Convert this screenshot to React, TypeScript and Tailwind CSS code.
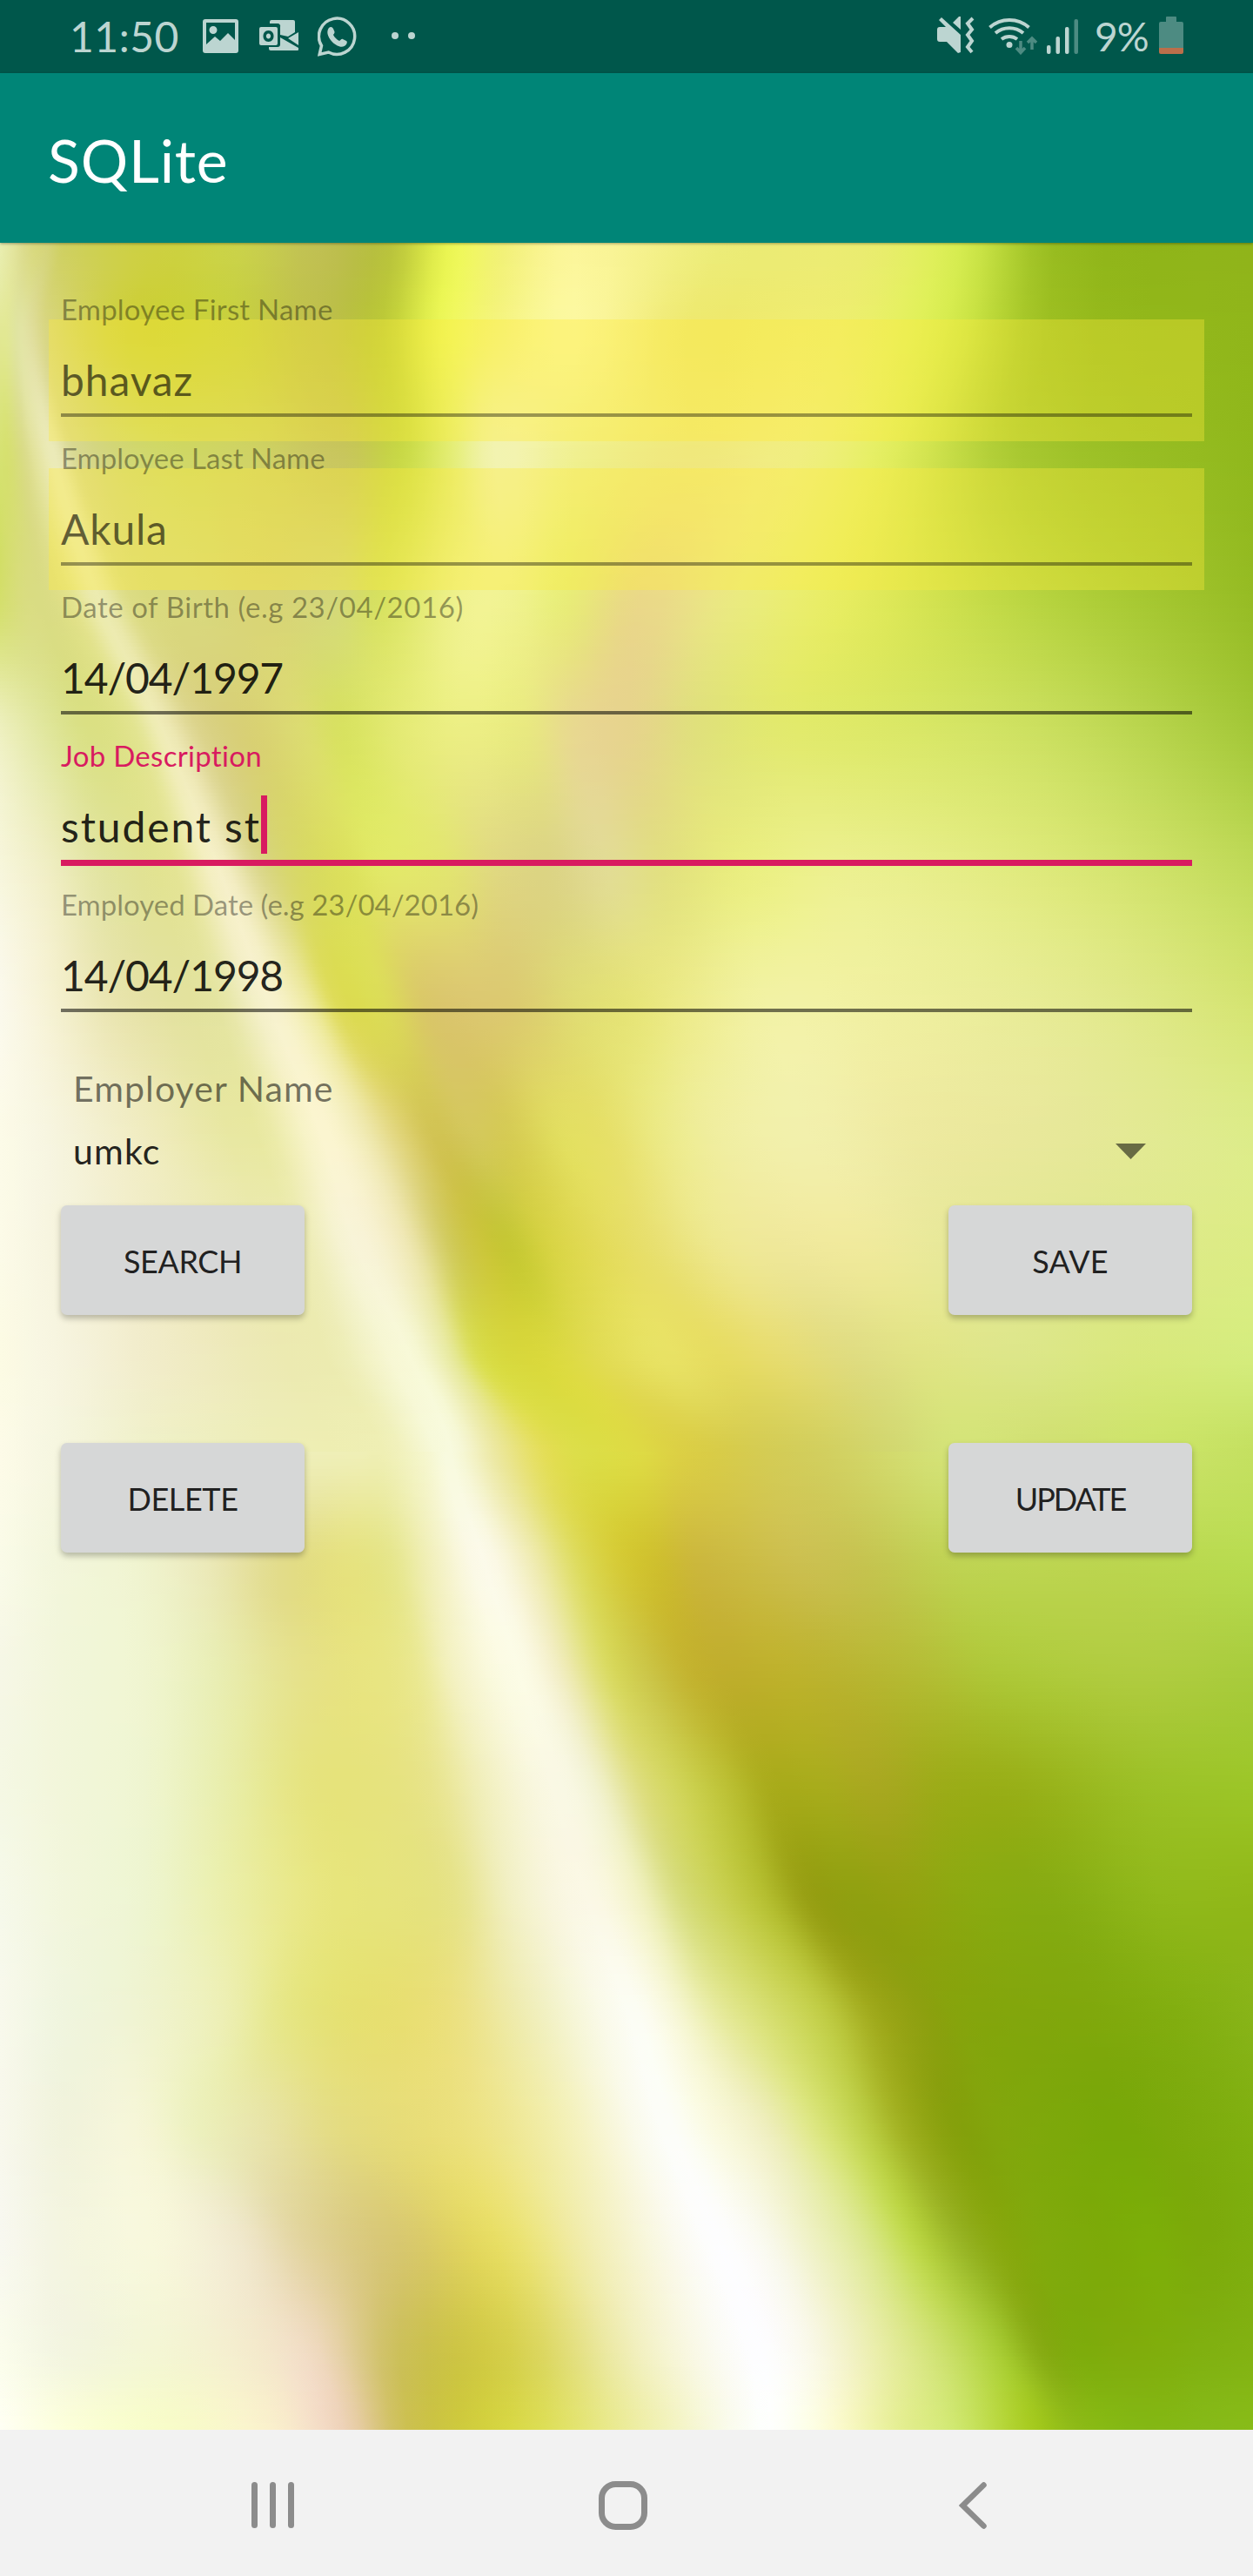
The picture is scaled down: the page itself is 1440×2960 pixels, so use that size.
import React from "react";

type Row = [number, string];

const UPPER: Row[] = [
  [280, "0:e9eeb0 15:e4e6a0 30:dcdc8c 45:d8d87c 60:d4d478 80:cfd060 200:cdd040 300:cad24a 400:c0c052 490:bac43c 560:eaf552 630:f2f178 720:fcf69a 900:ecec78 1080:eaec70 1200:d6ec50 1320:98bc20 1568:90b41a"],
  [380, "0:e2e894 8:e2e894 20:e0e4a0 28:e2e4a4 40:e0de9c 60:d8d680 160:cdd03c 290:c8d040 400:bfc04c 480:bdcb38 550:eaf558 620:f4f480 720:fbf8a0 860:efe970 1050:eeee70 1180:d8ec50 1310:9ec022 1568:90b61a"],
  [520, "0:d6e272 10:d6e070 30:dadc88 45:e4e4a0 68:ebeab8 95:d8d890 200:d0d868 320:cfd264 430:c8c65c 500:c8d846 560:e2ec70 620:f2f3b0 720:f0f090 860:f0e87c 1000:f0ee80 1120:e0ec5c 1280:a8c830 1568:90b81c"],
  [690, "0:d4df6c 30:d9dd80 60:dadc84 90:e2e28c 125:ecebb0 165:dcdc84 250:d8d87c 330:d8d474 420:d4d878 480:d8e260 580:f0f290 640:f0f290 710:e8ec78 800:ead888 920:eaea80 1060:e6ec60 1300:b8d440 1568:96bc24"],
  [840, "0:eef0c0 60:e0e69c 110:dae084 170:e2e490 205:f0ecb8 250:dcd48c 310:d8d074 380:dcdc70 430:d8e260 500:e4ea74 580:ecee84 660:e8e880 720:e8d890 790:e6d48c 870:e0e07c 1000:e2ea6c 1300:cce060 1568:a4c838"],
  [1000, "0:f7f6dc 60:f0eec4 130:e2e4a0 220:e4e494 275:f6f0c8 325:dcd88c 370:d8d868 430:dce05c 480:e2e868 560:e2e470 620:e0d880 690:dcd484 760:e2dc94 830:e2e080 930:eaee80 1060:ecf090 1330:dce878 1568:c0da58"],
  [1150, "0:fbf9ec 60:f6f2d4 150:e8e4ac 270:e4e4a0 335:f7f2ce 385:eeeaa0 420:dedc58 480:dcdc58 530:dac868 590:dcc870 650:dccc70 720:e0dc74 790:e6e478 850:ecea88 960:f2f2a4 1100:f0f0a0 1350:e4ea90 1568:d4e470"],
  [1300, "0:fcfbe8 60:f7f5e0 180:f0ecc0 320:e8e8a0 400:fbf5d0 450:f2ecb8 500:e0d478 540:d2c454 590:d4c85c 640:d6cc54 700:e2de60 760:e6e068 830:ecea88 900:f0eea0 1010:f2f0ac 1140:eeeaa0 1350:e6e898 1568:dcec88"],
  [1430, "0:fcfbe8 60:f7f5e0 200:f0ecc4 370:ecebb0 445:f8f4d8 510:efe8b4 560:d2cc60 600:ccc63c 640:c6c834 690:d8d444 760:e4dc5c 820:e8e070 900:eee890 980:efe89a 1080:f0ea9c 1200:e6e898 1380:dfe88c 1568:dcec84"],
  [1560, "0:fcfbe4 70:f7f5e0 200:f1ecc8 410:ecebb0 515:f8f9d8 565:e8eaa0 600:dade50 650:d8d83c 700:dcda40 760:e2dc54 830:e8e264 900:e6dc60 980:e6dc70 1070:dfdc80 1160:e0e484 1280:dce688 1420:d8e87c 1568:d4ec7c"],
  [1666, "0:fdfbe8 70:f6f6e0 220:eff0c4 480:efefb4 565:f8fade 620:ece8a0 680:e4de58 730:dcde48 790:dedb44 850:dcd044 900:d8cc48 960:d4cc54 1040:d2d060 1120:d2d870 1200:d4e478 1320:d0e070 1450:cce468 1568:c4e060"],
];

const LOWER: Row[] = [
  [1666, "0:fdfbe8 70:f6f6e0 150:f2f2d2 250:eff0c2 400:efefb8 450:efefb6 480:efefb4 530:f5f6cc 565:f8fade 620:ece8a0 680:e4de58 730:dcde48 800:dedb44 850:dcd044 900:d8cc48 960:d4cc54 1040:d2d060 1200:d4e478 1400:cee46c 1568:c4e060"],
  [1790, "0:fafbe8 70:f3f6dc 170:f0f4d0 260:ebe9b8 350:e2dc8c 430:e6e280 490:e6e68c 540:f2f0bc 605:fcfaea 665:f0ecb4 720:dedc60 770:d6cc38 820:cfc02e 870:ccb83c 930:ccbc44 1000:ccc050 1080:c6c450 1200:c0d454 1400:bcd650 1568:b8dc50"],
  [1920, "0:f6f7e6 80:f2f6da 180:f0f5d0 270:e9eeb4 370:e6e28c 450:e8e480 520:eae890 570:f4f2c4 650:fcfce6 700:f2eec4 760:dadb64 810:ccc648 860:c4b430 910:bfae2c 980:beb22c 1050:bab430 1150:b4bc34 1250:aec838 1420:b0cc40 1568:a8cc3c"],
  [2050, "0:f5f8e4 80:f2f6da 180:eff5d0 280:e9eeac 380:e6e480 460:e6e37c 540:e8e48c 610:f2f0c0 690:faf8e4 745:f2f2d0 800:dede80 850:d0d458 910:bcc034 960:aaac1c 1030:a8ac1c 1100:a8a820 1180:9cac18 1280:98b018 1430:9cc026 1568:9cc628"],
  [2180, "0:f6f9ea 80:f2f6dc 180:eef5d0 280:ebefac 400:e8e680 480:e6e47c 570:e6e388 640:f2f0c4 735:fbf8e6 800:f2f2c4 850:d8de80 910:c8d050 960:b4be30 1010:98a014 1070:90a010 1130:92a210 1220:8aaa10 1320:86ac12 1450:90b81a 1568:90b818"],
  [2310, "0:f8f9ec 80:f0f5de 170:f0f4d2 280:edefb4 360:e6e684 450:e6e070 560:ebe07c 650:efecb0 785:fcfdf4 840:f8f8da 900:e6ea9c 960:d6de70 1030:c0cc44 1090:a0aa1c 1150:8ea010 1200:86a40c 1280:82a60c 1370:80a80c 1470:82ae10 1568:88b418"],
  [2440, "0:f8f8ec 80:f1f3dc 170:f6f6d8 250:ecf0bc 330:e8e4a8 430:e4dc80 570:ebe07c 690:f2eeac 825:fcfdf8 890:fafae0 960:eeeebc 1020:dce680 1080:bed048 1130:a0b020 1190:86a00c 1250:82a60c 1330:7ca80a 1400:78a808 1480:7caa0c 1568:80b010"],
  [2570, "0:f8f8f0 80:f4f5e0 190:f8f8dc 300:f0e8cc 380:e2d49c 500:d8c870 620:e8de64 740:f2eeb4 880:fdfdfc 950:fafaf0 1010:f0f2c8 1080:dce890 1140:bed848 1200:98b424 1250:88a80e 1310:80aa0c 1380:7caa08 1440:7cae08 1500:7caa0a 1568:7eae0e"],
  [2700, "0:fbfdec 80:f3f5e0 200:f4f6d4 320:f4eacc 400:eed8bc 500:ccc05a 640:d6d04c 800:f2f0c0 935:fdfdfe 1000:fbfaf0 1060:f2f2c8 1110:e6eca0 1180:cce06c 1250:a8cc34 1300:88ac14 1350:7eac0c 1400:80ac0c 1450:80ae0c 1500:80b010 1568:82b212"],
  [2792, "0:fffff4 90:fcffd8 210:f8fcc8 340:faf0cc 430:eed2b8 510:ccc050 640:d8d844 800:eeeea4 950:fdfffc 1010:fdffe8 1050:fbfacc 1128:e4ee90 1195:d0e870 1288:a8cc20 1340:90bc18 1380:88ba14 1420:84b814 1460:84b814 1510:86ba18 1568:88bc18"],
];

const STEP = 4;
const PARTS = 4;

function parse(row: string) {
  return row.split(" ").map((part) => {
    const [x, hex] = part.split(":");
    const n = parseInt(hex, 16);
    return [Number(x), n >> 16, (n >> 8) & 255, n & 255];
  });
}

function hermite(a: number, b: number, ma: number, mb: number, t: number) {
  const t2 = t * t;
  const t3 = t2 * t;
  return (2 * t3 - 3 * t2 + 1) * a + (t3 - 2 * t2 + t) * ma + (3 * t2 - 2 * t3) * b + (t3 - t2) * mb;
}

/** Slope of channel c at knot k, as the mean of the slopes on its two sides. */
function slope(knots: number[][], k: number, c: number) {
  const lo = Math.max(0, k - 1);
  const hi = Math.min(knots.length - 1, k + 1);
  return (knots[hi][c] - knots[lo][c]) / Math.max(1, knots[hi][0] - knots[lo][0]);
}

function toColor(rgb: number[]) {
  const [r, g, b] = rgb.map((v) => Math.max(0, Math.min(255, Math.round(v))));
  return `rgb(${r},${g},${b})`;
}

function buildStrips() {
  const upper = UPPER.map((r) => parse(r[1]));
  const lower = LOWER.map((r) => parse(r[1]));
  const out: { y: number; stops: { at: number; color: string }[] }[] = [];
  for (let y = 280; y < 2792; y += STEP) {
    const rows = y < 1666 ? UPPER : LOWER;
    const data = y < 1666 ? upper : lower;
    let i = 0;
    while (i < rows.length - 2 && rows[i + 1][0] <= y) i++;
    const t = (y - rows[i][0]) / (rows[i + 1][0] - rows[i][0]);
    const before = data[Math.max(0, i - 1)];
    const after = data[Math.min(data.length - 1, i + 2)];
    const a = data[i];
    const b = data[i + 1];
    const knots = a.map((s, k) =>
      s.map((v, c) => hermite(v, b[k][c], (b[k][c] - before[k][c]) / 2, (after[k][c] - v) / 2, t)),
    );
    const stops: { at: number; color: string }[] = [];
    for (let k = 0; k < knots.length - 1; k++) {
      const w = knots[k + 1][0] - knots[k][0];
      for (let j = 0; j < PARTS; j++) {
        const u = j / PARTS;
        stops.push({
          at: (knots[k][0] + w * u) / 1568,
          color: toColor(
            [1, 2, 3].map((c) =>
              hermite(knots[k][c], knots[k + 1][c], slope(knots, k, c) * w, slope(knots, k + 1, c) * w, u),
            ),
          ),
        });
      }
    }
    stops.push({ at: 1, color: toColor(knots[knots.length - 1].slice(1)) });
    out.push({ y, stops });
  }
  return out;
}

const STRIPS = buildStrips();

function LeafBackdrop() {
  return (
    <svg
      className="absolute inset-0 h-full w-full"
      viewBox="0 0 1440 2512"
      preserveAspectRatio="none"
      shapeRendering="crispEdges"
      aria-hidden="true"
    >
      <defs>
        {STRIPS.map((s) => (
          <linearGradient key={s.y} id={`leaf-${s.y}`}>
            {s.stops.map((p, i) => (
              <stop key={i} offset={p.at} stopColor={p.color} />
            ))}
          </linearGradient>
        ))}
      </defs>
      {STRIPS.map((s) => (
        <rect key={s.y} x="0" y={s.y - 280} width="1440" height={STEP} fill={`url(#leaf-${s.y})`} />
      ))}
    </svg>
  );
}

function StatusBar() {
  return (
    <div className="flex h-[84px] items-center bg-[#00574b] text-[#bcd5d1]">
      <span className="ml-[80px] w-[153px] text-[48px] leading-[84px] tracking-[0.5px]">11:50</span>
      <svg width="41" height="39" viewBox="0 0 41 39" className="-mt-[2px]">
        <path
          fill="currentColor"
          fillRule="evenodd"
          d="M3 0h35a3 3 0 0 1 3 3v33a3 3 0 0 1-3 3H3a3 3 0 0 1-3-3V3a3 3 0 0 1 3-3zM4 4v25l10-9 6 5 9-9 8 8V4zM12 8a4.500 4.500 0 1 1 0 9 4.500 4.500 0 0 1 0-9z"
        />
      </svg>
      <svg width="46" height="36" viewBox="0 0 46 36" className="-mt-[2px] ml-[24px]">
        <path fill="currentColor" d="M12 4V2a2 2 0 0 1 2-2h25a2 2 0 0 1 2 2v12l-8 5-9-2V8a3 3 0 0 0-3-4z" />
        <path fill="currentColor" d="M45 14v15L33 21zM24 20l21 12v2a1 1 0 0 1-1 1H13a2 2 0 0 1-2-2v-2h10a3 3 0 0 0 3-3z" />
        <path
          fill="currentColor"
          fillRule="evenodd"
          d="M2 8h17a2 2 0 0 1 2 2v17a2 2 0 0 1-2 2H2a2 2 0 0 1-2-2V10a2 2 0 0 1 2-2zM10.500 12c-8 0-8 13 0 13s8-13 0-13zm0 3.500c3.500 0 3.500 6 0 6s-3.500-6 0-6z"
        />
      </svg>
      <svg width="46" height="46" viewBox="0 0 46 46" className="-mt-[1px] ml-[21px]">
        <path
          fill="none"
          stroke="currentColor"
          strokeWidth="3.500"
          d="M2.200 43.500 4.500 33.500A20.600 20.600 0 1 1 12.500 41z"
        />
        <path
          fill="currentColor"
          d="M13 13c2-2 4-1 5 1l1.500 3.500c.5 1.500-1.500 3-1.500 3.500 1.500 3 4 5.500 7 7 1 0 2.500-3 4-2l4 2c1 .5 1 1.500.500 3-1 3-5 4.500-8 3.500C18 32 13 26 11.500 20c-.5-3 0-5 1.500-7z"
        />
      </svg>
      <div className="-mt-[2px] ml-[39px] flex gap-[11px]">
        <i className="size-[8px] rounded-full bg-current" />
        <i className="size-[8px] rounded-full bg-current" />
      </div>

      <div className="ml-auto flex h-full items-center pr-[80px]">
        <svg width="43" height="44" viewBox="0 0 43 44" className="-mt-[3px]">
          <path fill="currentColor" d="M0 15a3 3 0 0 1 3-3h7L2 4l3-3 22 20v20l-3 1L11 29H3a3 3 0 0 1-3-3zM27 0v15l-9-8 7-7z" />
          <path fill="none" stroke="currentColor" strokeWidth="4" d="M41 2l-6 6 5 7-5 6 5 7-5 7 5 6" />
        </svg>
        <svg width="58" height="44" viewBox="0 0 58 44" className="-mt-[2px] ml-[16px]">
          <g fill="none" stroke="currentColor" strokeWidth="4">
            <path d="M1.500 12.500a34 34 0 0 1 45 0" />
            <path d="M8 19a25 25 0 0 1 32 0" />
            <path d="M15 26a15 15 0 0 1 18 0" />
          </g>
          <circle cx="24" cy="32.500" r="3.500" fill="currentColor" />
          <path fill="none" stroke="#4d8b82" strokeWidth="3.500" d="M37 28v13m-5-5 5 5.500 5-5.500M50 38V26m-5 4 5-5 5 5" />
        </svg>
        <svg width="37" height="42" viewBox="0 0 37 42" className="ml-[9px]">
          <rect x="0" y="31" width="4.500" height="10" rx="2" fill="currentColor" />
          <rect x="10.500" y="21" width="4.500" height="20" rx="2" fill="currentColor" />
          <rect x="21" y="10" width="4.500" height="31" rx="2" fill="currentColor" />
          <rect x="31.500" y="1" width="4.500" height="40" rx="2" fill="#4d8b82" />
        </svg>
        <span className="ml-[18px] w-[64px] whitespace-nowrap text-[46px] leading-[84px] tracking-[-1px]">9%</span>
        <svg width="28" height="44" viewBox="0 0 28 44" className="-mt-[2px] ml-[10px]">
          <path fill="#4d8b82" d="M8 1a1 1 0 0 1 1-1h10a1 1 0 0 1 1 1v5h6a2 2 0 0 1 2 2v28H0V8a2 2 0 0 1 2-2h6z" />
          <path fill="#bb6f4b" d="M0 36h28v5a2 2 0 0 1-2 2H2a2 2 0 0 1-2-2z" />
        </svg>
      </div>
    </div>
  );
}

type FieldProps = {
  label: string;
  value: string;
  labelClass: string;
  valueClass: string;
  state?: "filled" | "focused";
};

function Field({ label, value, labelClass, valueClass, state }: FieldProps) {
  const focused = state === "focused";
  const filled = state === "filled";
  return (
    <div className="relative h-[171px] px-[70px]">
      {filled && <div className="absolute top-[34px] right-[56px] left-[56px] h-[140px] bg-[#ffeb3b]/35" />}
      <div className="relative">
        <div
          className={`h-[44px] text-[33px] leading-[44px] whitespace-nowrap ${labelClass} ${
            focused ? "text-[#d81b60]" : "text-black/38"
          }`}
        >
          {label}
        </div>
        <div
          className={`mt-[30px] flex h-[60px] items-center text-[48px] leading-[60px] whitespace-nowrap ${valueClass} ${
            filled ? "text-black/60" : "text-black/87"
          }`}
        >
          <span>{value}</span>
          {focused && <i className="-mt-[5px] h-[67px] w-[7px] shrink-0 bg-[#d81b60]" />}
        </div>
        <div
          className={`mt-[8px] ${
            focused ? "h-[7px] bg-[#d81b60]" : filled ? "h-[4px] bg-black/38" : "h-[4px] bg-black/54"
          }`}
        />
      </div>
    </div>
  );
}

function ActionButton({ label, textClass }: { label: string; textClass: string }) {
  return (
    <button
      className={`h-[126px] w-[280px] rounded-[7px] bg-[#d6d7d7] pt-[2px] text-[36px] text-black/87 shadow-[0_4px_7px_rgba(0,0,0,0.25)] ${textClass}`}
    >
      {label}
    </button>
  );
}

export default function App() {
  return (
    <div className="flex h-[2960px] w-[1440px] flex-col overflow-hidden font-['Lato',sans-serif] [font-variant-ligatures:none]">
      <StatusBar />
      <header className="relative z-10 flex h-[195px] items-center bg-[#008577] pl-[55px] shadow-[0_1px_3px_rgba(0,0,0,0.35)]">
        <h1 className="pt-[5px] text-[68px] leading-[80px] tracking-[0.8px] text-white">SQLite</h1>
      </header>

      <main className="relative flex-1">
        <LeafBackdrop />
        <div className="relative pt-[54px]">
          <Field label="Employee First Name" value="bhavaz" labelClass="tracking-[0.2px]" valueClass="tracking-[0.9px]" state="filled" />
          <Field label="Employee Last Name" value="Akula" labelClass="" valueClass="tracking-[0.8px]" state="filled" />
          <Field label="Date of Birth (e.g 23/04/2016)" value="14/04/1997" labelClass="tracking-[0.55px]" valueClass="tracking-[-1.1px]" />
          <Field label="Job Description" value="student st" labelClass="tracking-[0.3px]" valueClass="tracking-[1.9px]" state="focused" />
          <Field label="Employed Date (e.g 23/04/2016)" value="14/04/1998" labelClass="" valueClass="tracking-[-1.1px]" />

          <div className="mt-[33px] h-[60px] pl-[84px] text-[41px] leading-[60px] tracking-[1.1px] text-black/54">
            Employer Name
          </div>
          <div className="mt-[12px] flex h-[60px] items-center justify-between pr-[123px] pl-[84px] text-[41px] leading-[60px] tracking-[1.2px] text-black/87">
            <span>umkc</span>
            <svg width="35" height="18" viewBox="0 0 35 18">
              <path d="M0 0h35L17.500 18z" fill="#000" fillOpacity="0.54" />
            </svg>
          </div>

          <div className="mt-[32px] flex justify-between px-[70px]">
            <ActionButton label="SEARCH" textClass="tracking-[-0.4px]" />
            <ActionButton label="SAVE" textClass="tracking-[0.2px]" />
          </div>
          <div className="mt-[147px] flex justify-between px-[70px]">
            <ActionButton label="DELETE" textClass="tracking-[-0.4px]" />
            <ActionButton label="UPDATE" textClass="tracking-[-2px]" />
          </div>
        </div>
      </main>

      <nav className="flex h-[168px] items-center justify-between bg-[#f2f2f2] pt-[6px] pr-[305px] pl-[289px] text-[#8c8c8c]">
        <svg width="50" height="54" viewBox="0 0 50 54" fill="currentColor">
          <rect x="0" y="0" width="7" height="53" rx="3.500" />
          <rect x="21" y="0" width="7" height="53" rx="3.500" />
          <rect x="42" y="0" width="7" height="53" rx="3.500" />
        </svg>
        <svg width="58" height="58" viewBox="0 0 58 58" fill="none" stroke="currentColor" strokeWidth="7" className="mr-[9px]">
          <rect x="4.500" y="4.500" width="49" height="49" rx="16" />
        </svg>
        <svg width="33" height="54" viewBox="0 0 33 54" fill="none" stroke="currentColor" strokeWidth="6.500" strokeLinecap="round">
          <path d="M28.500 3.500 4.500 27l24 23.500" />
        </svg>
      </nav>
    </div>
  );
}
